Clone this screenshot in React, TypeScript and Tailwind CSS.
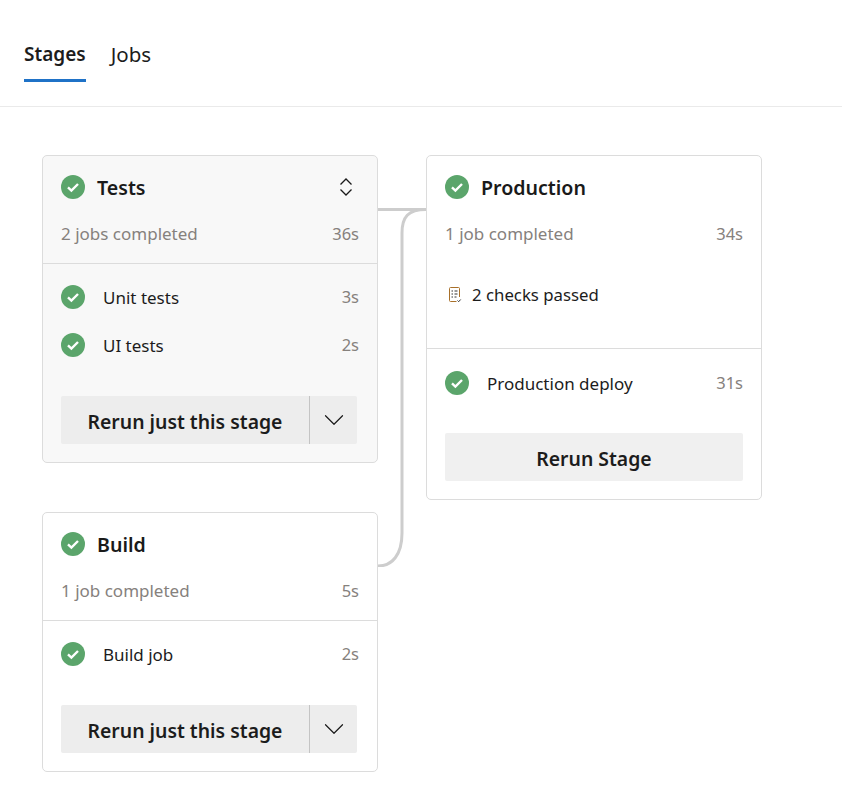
import { ChevronDown } from 'lucide-react';

const font = { fontFamily: '"Noto Sans", "Open Sans", sans-serif' };

const StatusIcon = () => (
  <svg width="24" height="24" viewBox="0 0 24 24" className="shrink-0">
    <circle cx="12" cy="12" r="12" fill="#5ba56b" />
    <path d="M7 12.400l3.400 3.200L17 9" fill="none" stroke="#fff" strokeWidth="2.400" />
  </svg>
);

const ExpandIcon = () => (
  <svg width="16" height="20" viewBox="0 0 16 20" fill="none" stroke="#1a1a1a" strokeWidth="1.3">
    <path d="M2.500 7.500L8 2l5.500 5.500" />
    <path d="M2.500 12.500L8 18l5.500-5.500" />
  </svg>
);

const ChecksIcon = () => (
  <svg width="14" height="17" viewBox="0 0 14 17" fill="none" strokeWidth="1">
    <path d="M8.500 15.500H2.500a1 1 0 0 1-1-1v-12a1 1 0 0 1 1-1h8a1 1 0 0 1 1 1V11" stroke="#a8702a" />
    <path d="M3.500 5h1.500M6.500 5H9.500M3.500 8h1.500M6.500 8H9.500M3.500 11h1.500M6.500 11H8.500" stroke="#333" />
    <path d="M9.500 14.500l1.200 1.200 2-2.200" stroke="#333" />
  </svg>
);

interface Job {
  name: string;
  time: string;
}

const JobRow = ({ name, time }: Job) => (
  <div className="flex h-[48px] items-center justify-between">
    <div className="flex items-center gap-[18px]">
      <StatusIcon />
      <span className="pt-[1px] text-[17px] text-[#1c1c1c]">{name}</span>
    </div>
    <span className="text-[16.500px] text-[#86817d]">{time}</span>
  </div>
);

const SplitButton = () => (
  <div className="flex h-[48px] w-[296px] overflow-hidden rounded-[2px] bg-[#ededed]">
    <button className="flex-1 border-r border-[#c4c4c4] pt-[3px] text-[19.400px] font-semibold text-[#1c1c1c]">
      Rerun just this stage
    </button>
    <button className="flex w-[47px] items-center justify-center">
      <ChevronDown size={34} strokeWidth={0.85} color="#1a1a1a" />
    </button>
  </div>
);

const CardHead = ({ title, summary, time, expand }: { title: string; summary: string; time: string; expand?: boolean }) => (
  <div className="px-[18px]">
    <div className="flex h-[62px] items-center justify-between">
      <div className="flex items-center gap-[12px]">
        <StatusIcon />
        <span className="pt-[1px] text-[19.600px] font-semibold text-[#1a1a1a]">{title}</span>
      </div>
      {expand && (
        <div className="mr-[5px]">
          <ExpandIcon />
        </div>
      )}
    </div>
    <div className="mt-[1px] flex h-[30px] items-center justify-between">
      <span className="text-[17px] text-[#86817d]">{summary}</span>
      <span className="text-[16.500px] text-[#86817d]">{time}</span>
    </div>
  </div>
);

export default function App() {
  return (
    <div className="min-h-[791px] bg-white" style={font}>
      <div className="flex h-[107px] gap-[25px] border-b border-[#eaeaea] pl-[24px] pt-[40px]">
        <div className="h-[42px] border-b-[3px] border-[#1f72c7] text-[19px] font-semibold text-[#1c1c1c]">Stages</div>
        <div className="text-[20.500px] leading-[28px] text-[#1c1c1c]">Jobs</div>
      </div>

      <div className="relative flex gap-[48px] pl-[42px] pt-[48px]">
        <svg width="50" height="370" className="absolute left-[378px] top-[90px]" fill="none" stroke="#cdcdcd" strokeWidth="3">
          <path d="M0 12.500H48" />
          <path d="M48 12.500C30 12.500 24 20 24 36V336C24 358 14 369 0 369" />
        </svg>

        <div className="flex w-[336px] flex-col gap-[49px]">
          <div className="h-[308px] rounded-[5px] border border-[#dcdcdc] bg-[#f8f8f8]">
            <CardHead title="Tests" summary="2 jobs completed" time="36s" expand />
            <div className="mt-[14px] border-t border-[#dcdcdc] px-[18px] pt-[9px]">
              <JobRow name="Unit tests" time="3s" />
              <JobRow name="UI tests" time="2s" />
              <div className="mt-[27px]">
                <SplitButton />
              </div>
            </div>
          </div>

          <div className="h-[260px] rounded-[5px] border border-[#dcdcdc] bg-white">
            <CardHead title="Build" summary="1 job completed" time="5s" />
            <div className="mt-[14px] border-t border-[#dcdcdc] px-[18px] pt-[9px]">
              <JobRow name="Build job" time="2s" />
              <div className="mt-[27px]">
                <SplitButton />
              </div>
            </div>
          </div>
        </div>

        <div className="h-[345px] w-[336px] rounded-[5px] border border-[#dcdcdc] bg-white">
          <CardHead title="Production" summary="1 job completed" time="34s" />
          <div className="flex h-[85px] items-center gap-[10px] pl-[21px] pt-[6px] text-[16.800px] text-[#1c1c1c]">
            <ChecksIcon />
            <span>2 checks passed</span>
          </div>
          <div className="mt-[14px] border-t border-[#dcdcdc] px-[18px] pt-[10px]">
            <JobRow name="Production deploy" time="31s" />
            <button className="mt-[26px] h-[48px] w-[298px] rounded-[2px] bg-[#f0f0f0] pt-[3px] text-[19.400px] font-semibold text-[#1c1c1c]">
              Rerun Stage
            </button>
          </div>
        </div>
      </div>
    </div>
  );
}
